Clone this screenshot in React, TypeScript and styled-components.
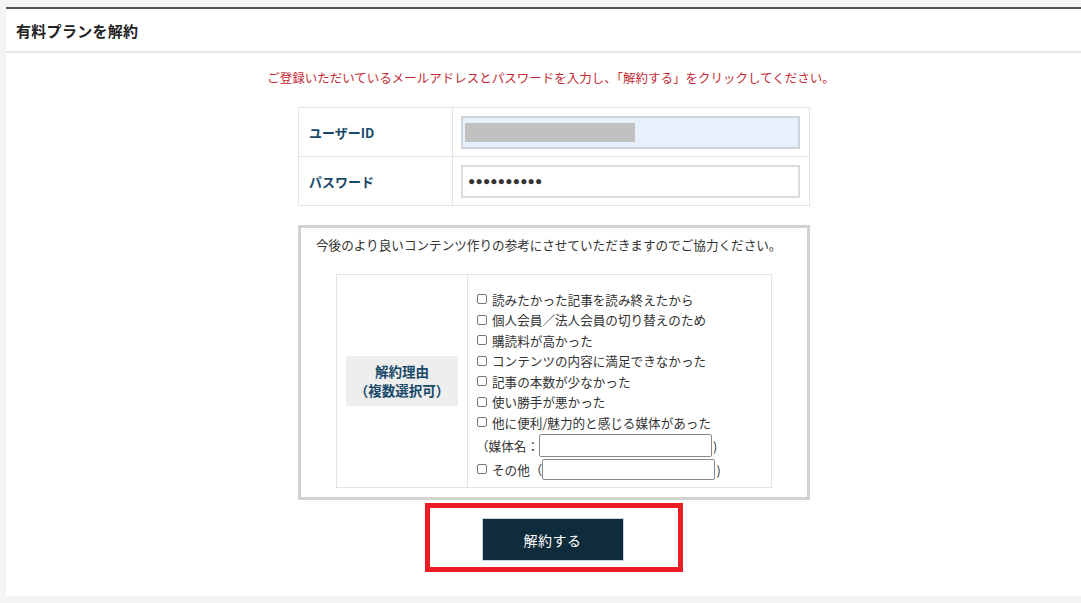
import React from "react";
import styled, { createGlobalStyle } from "styled-components";

const GlobalStyle = createGlobalStyle`
  html, body {
    margin: 0;
    padding: 0;
    background: #f4f4f4;
    overflow: hidden;
  }
  body {
    font-family: "Noto Sans CJK JP", "Noto Sans", sans-serif;
    color: #333;
  }
`;

const Page = styled.div`
  padding: 7px 0 0 6px;
  height: 603px;
  box-sizing: border-box;
`;

const Panel = styled.div`
  width: 1096px;
  height: 589px;
  background: #fff;
  border-top: 2px solid #555;
  box-sizing: border-box;
  display: flex;
  flex-direction: column;
`;

const Header = styled.div`
  height: 44px;
  border-bottom: 2px solid #e6e6e6;
  display: flex;
  align-items: center;
  padding-left: 10px;
  box-sizing: border-box;
`;

const Title = styled.h1`
  margin: 0;
  font-size: 15px;
  font-weight: 700;
  color: #222;
  letter-spacing: 0.3px;
`;

const Body = styled.div`
  display: flex;
  flex-direction: column;
  align-items: center;
`;

const Notice = styled.p`
  margin: 15px 6px 0 0;
  font-size: 12.5px;
  line-height: 20px;
  color: #c42a33;
  white-space: nowrap;
`;

const LoginTable = styled.table`
  margin-top: 19px;
  width: 512px;
  border-collapse: collapse;
  table-layout: fixed;
`;

const LabelCell = styled.th`
  width: 154px;
  height: 48px;
  box-sizing: border-box;
  border: 1px solid #e3e3e3;
  text-align: left;
  padding: 0 0 0 10px;
  font-size: 13px;
  font-weight: 700;
  color: #18496a;
`;

const FieldCell = styled.td`
  border: 1px solid #e3e3e3;
  padding: 0 9px 0 8px;
  height: 48px;
`;

const TextField = styled.div<{ $autofill?: boolean }>`
  height: 33px;
  box-sizing: border-box;
  border: 2px solid ${(p) => (p.$autofill ? "#cfd3da" : "#dcdcdc")};
  background: ${(p) => (p.$autofill ? "#e8f0fe" : "#fff")};
  display: flex;
  align-items: center;
  padding-left: 2px;
`;

const Redacted = styled.div`
  width: 170px;
  height: 19px;
  background: #c1c1c1;
`;

const Dots = styled.span`
  padding-left: 3px;
  font-size: 12px;
  letter-spacing: 0.2px;
  color: #333;
  font-family: "Liberation Sans", sans-serif;
`;

const SurveyBox = styled.div`
  margin-top: 19px;
  width: 512px;
  height: 275px;
  box-sizing: border-box;
  border: 3px solid #d2d2d2;
  padding: 7px 0 9px;
  display: flex;
  flex-direction: column;
`;

const Intro = styled.p`
  margin: 0;
  padding-left: 15px;
  font-size: 12.6px;
  line-height: 20px;
  color: #333;
  white-space: nowrap;
`;

const ReasonTable = styled.table`
  margin: 19px auto 0;
  width: 436px;
  border-collapse: collapse;
  table-layout: fixed;
`;

const ReasonLabelCell = styled.th`
  width: 131px;
  box-sizing: border-box;
  border: 1px solid #e3e3e3;
  padding: 0 9px;
  vertical-align: middle;
`;

const ReasonLabel = styled.div`
  background: #eeeeee;
  height: 50px;
  display: flex;
  flex-direction: column;
  align-items: center;
  justify-content: center;
  font-size: 13.5px;
  line-height: 19px;
  font-weight: 700;
  color: #18496a;
`;

const OptionsCell = styled.td`
  border: 1px solid #e3e3e3;
  padding: 14px 0 6px 8px;
  vertical-align: top;
`;

const Option = styled.label`
  display: flex;
  align-items: center;
  height: 20.5px;
  font-size: 12.6px;
  color: #333;
  white-space: nowrap;
`;

const Check = styled.input.attrs({ type: "checkbox" })`
  appearance: none;
  width: 10px;
  height: 10px;
  margin: 0 5px 0 1px;
  border: 1px solid #777;
  border-radius: 2px;
  box-sizing: border-box;
  background: #fff;
  flex: none;
`;

const FieldRow = styled.div<{ $h: number }>`
  display: flex;
  align-items: center;
  height: ${(p) => p.$h}px;
  font-size: 12.6px;
  color: #333;
  white-space: nowrap;
`;

const SmallInput = styled.input.attrs({ type: "text" })<{ $h: number }>`
  width: 173px;
  height: ${(p) => p.$h}px;
  box-sizing: border-box;
  border: 1px solid #8a8a8a;
  border-radius: 2px;
  padding: 0;
  margin: 0 1px 0 0;
  background: #fff;
  outline: none;
`;

const HighlightBox = styled.div`
  margin-top: 3px;
  width: 258px;
  height: 69px;
  box-sizing: border-box;
  border: 5px solid #ec1c24;
  display: flex;
  justify-content: center;
  padding-top: 10px;
  padding-right: 3px;
`;

const SubmitButton = styled.button`
  width: 142px;
  height: 43px;
  background: #0f2c3d;
  border: 1px solid #c9d2da;
  color: #fff;
  font-family: "Noto Sans CJK JP", sans-serif;
  font-size: 14px;
  letter-spacing: 0.5px;
  cursor: pointer;
`;

const reasons = [
  "読みたかった記事を読み終えたから",
  "個人会員／法人会員の切り替えのため",
  "購読料が高かった",
  "コンテンツの内容に満足できなかった",
  "記事の本数が少なかった",
  "使い勝手が悪かった",
  "他に便利/魅力的と感じる媒体があった",
];

export default function App() {
  return (
    <>
      <GlobalStyle />
      <Page>
        <Panel>
          <Header>
            <Title>有料プランを解約</Title>
          </Header>
          <Body>
            <Notice>
              ご登録いただいているメールアドレスとパスワードを入力し、「解約する」をクリックしてください。
            </Notice>
            <LoginTable>
              <tbody>
                <tr>
                  <LabelCell>ユーザーID</LabelCell>
                  <FieldCell>
                    <TextField $autofill>
                      <Redacted />
                    </TextField>
                  </FieldCell>
                </tr>
                <tr>
                  <LabelCell>パスワード</LabelCell>
                  <FieldCell>
                    <TextField>
                      <Dots>●●●●●●●●●●</Dots>
                    </TextField>
                  </FieldCell>
                </tr>
              </tbody>
            </LoginTable>
            <SurveyBox>
              <Intro>
                今後のより良いコンテンツ作りの参考にさせていただきますのでご協力ください。
              </Intro>
              <ReasonTable>
                <tbody>
                  <tr>
                    <ReasonLabelCell>
                      <ReasonLabel>
                        <span>解約理由</span>
                        <span>（複数選択可）</span>
                      </ReasonLabel>
                    </ReasonLabelCell>
                    <OptionsCell>
                      {reasons.map((r) => (
                        <Option key={r}>
                          <Check />
                          {r}
                        </Option>
                      ))}
                      <FieldRow $h={25}>
                        <span>（媒体名：</span>
                        <SmallInput $h={23} />
                        <span>)</span>
                      </FieldRow>
                      <FieldRow $h={23}>
                        <Check />
                        <span>その他（</span>
                        <SmallInput $h={21} />
                        <span>)</span>
                      </FieldRow>
                    </OptionsCell>
                  </tr>
                </tbody>
              </ReasonTable>
            </SurveyBox>
            <HighlightBox>
              <SubmitButton>解約する</SubmitButton>
            </HighlightBox>
          </Body>
        </Panel>
      </Page>
    </>
  );
}
